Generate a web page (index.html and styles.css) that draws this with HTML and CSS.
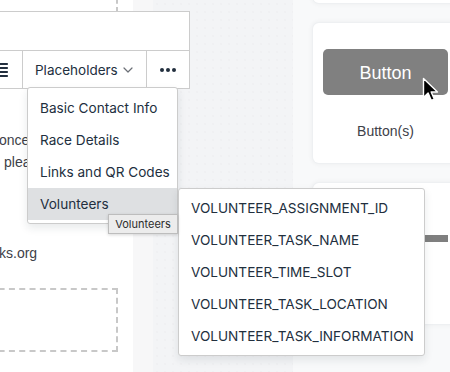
FILE: index.html
```html
<!DOCTYPE html>
<html lang="en">
<head>
    <meta charset="UTF-8">
    <meta name="viewport" content="width=device-width, initial-scale=1.0">
    <title>Email Template Editor</title>
    <link rel="stylesheet" href="styles.css">
</head>
<body>
    <div class="app">
        <aside class="doc">
            <div class="drop-zone drop-top"></div>
            <p class="line first">once</p>
            <p class="line indent">please</p>
            <p class="line link">ks.org</p>
            <div class="drop-zone drop-bottom"></div>
        </aside>
        <div class="gutter"></div>
        <main class="canvas"></main>
        <aside class="blocks">
            <div class="card card-top"></div>
            <div class="card">
                <div class="btn-preview">Button</div>
                <div class="card-label">Button(s)</div>
            </div>
            <div class="card">
                <div class="rule-preview"></div>
            </div>
        </aside>

        <!-- inline editor toolbar -->
        <div class="editor">
            <div class="editor-body"></div>
            <div class="toolbar">
                <div class="tb-group tb-align">
                    <svg width="24" height="24" viewBox="0 0 24 24"><path fill="#222f3e" d="M5 5h14c.6 0 1 .4 1 1s-.4 1-1 1H5a1 1 0 1 1 0-2zm0 4h14c.6 0 1 .4 1 1s-.4 1-1 1H5a1 1 0 1 1 0-2zm0 4h14c.6 0 1 .4 1 1s-.4 1-1 1H5a1 1 0 0 1 0-2zm0 4h14c.6 0 1 .4 1 1s-.4 1-1 1H5a1 1 0 0 1 0-2z"/></svg>
                </div>
                <div class="tb-group tb-menu">
                    <span>Placeholders</span>
                    <svg width="10" height="10" viewBox="0 0 10 10"><path d="M1 3l4 4 4-4" fill="none" stroke="#6b6f76" stroke-width="1.2" stroke-linecap="round" stroke-linejoin="round"/></svg>
                </div>
                <div class="tb-group tb-more">
                    <svg width="24" height="24" viewBox="0 0 24 24"><circle cx="6" cy="12" r="2" fill="#222f3e"/><circle cx="12" cy="12" r="2" fill="#222f3e"/><circle cx="18" cy="12" r="2" fill="#222f3e"/></svg>
                </div>
            </div>
        </div>

        <div class="menu">
            <div class="menu-item">Basic Contact Info</div>
            <div class="menu-item">Race Details</div>
            <div class="menu-item">Links and QR Codes</div>
            <div class="menu-item active">Volunteers</div>
        </div>

        <div class="menu submenu">
            <div class="menu-item">VOLUNTEER_ASSIGNMENT_ID</div>
            <div class="menu-item">VOLUNTEER_TASK_NAME</div>
            <div class="menu-item">VOLUNTEER_TIME_SLOT</div>
            <div class="menu-item">VOLUNTEER_TASK_LOCATION</div>
            <div class="menu-item">VOLUNTEER_TASK_INFORMATION</div>
        </div>

        <div class="tooltip">Volunteers</div>

        <svg class="cursor" width="18" height="26" viewBox="0 0 18 26">
            <path d="M1.5 1.5v19l4.6-4.4 3.2 7.4 3-1.3-3.1-7.2h6.3z" fill="#000" stroke="#fff" stroke-width="1.4" stroke-linejoin="round"/>
        </svg>
    </div>
</body>
</html>
```

FILE: styles.css
```css
body {
    margin: 0;
    font-family: "Liberation Sans", Arial, sans-serif;
}
.app {
    position: relative;
    width: 450px;
    height: 372px;
    overflow: hidden;
    display: flex;
    background: #f8f9fa;
}
.doc {
    width: 133px;
    flex: none;
    background: #fff;
    overflow: hidden;
}
.drop-zone {
    box-sizing: border-box;
    width: 140px;
    margin-left: -22px;
    border: 2px dashed #c8c8c8;
}
.drop-top {
    height: 43px;
    margin-top: -30px;
}
.drop-bottom {
    height: 64px;
    margin-top: 24px;
}
.line {
    margin: 0;
    font-size: 14px;
    line-height: 22px;
    color: #3d4148;
    white-space: nowrap;
}
.first {
    margin-top: 116px;
    margin-left: -1px;
}
.indent {
    padding-left: 4px;
}
.link {
    margin-top: 69px;
    margin-left: -1px;
}
.gutter {
    width: 20px;
    flex: none;
    background: #f7f7f8;
}
.canvas {
    width: 140px;
    flex: none;
    background-color: #f3f4f6;
    background-image: radial-gradient(#eaebee 0.6px, transparent 0.8px);
    background-size: 8px 8px;
}
.blocks {
    flex: 1;
    padding-left: 20px;
    display: flex;
    flex-direction: column;
    gap: 20px;
    overflow: hidden;
    background: #f8f9fa;
}
.card {
    flex: none;
    width: 145px;
    box-sizing: border-box;
    background: #fff;
    border-radius: 6px;
    box-shadow: 0 0 0 1px #eef0f2, 0 0 4px 2px rgba(0, 0, 0, 0.035);
    padding: 26px 10px 0;
}
.card:nth-child(2) {
    height: 140px;
}
.card:nth-child(3) {
    height: 141px;
}
.card-top {
    height: 40px;
    margin-top: -37px;
}
.btn-preview {
    height: 46px;
    box-sizing: border-box;
    padding-top: 2px;
    border-radius: 5px;
    background: #808080;
    color: #fff;
    font-size: 18px;
    display: flex;
    align-items: center;
    justify-content: center;
}
.card-label {
    margin-top: 28px;
    text-align: center;
    font-size: 14px;
    line-height: 16px;
    color: #3d4148;
}
.rule-preview {
    margin-top: 26px;
    height: 7px;
    background: #7f7f7f;
}

/* floating editor */
.editor {
    position: absolute;
    left: -60px;
    top: 11px;
    width: 250px;
    height: 78px;
    box-sizing: border-box;
    border: 1px solid #cccccc;
    background: #fff;
    display: flex;
    flex-direction: column;
    font-family: Inter, "Noto Sans", sans-serif;
}
.editor-body {
    height: 38px;
    border-bottom: 1px solid #cccccc;
}
.toolbar {
    flex: 1;
    display: flex;
}
.tb-group {
    display: flex;
    align-items: center;
}
.tb-align {
    width: 81px;
    justify-content: flex-end;
    padding-right: 10px;
    box-sizing: border-box;
}
.tb-menu {
    width: 124px;
    box-sizing: border-box;
    border-left: 1px solid #cccccc;
    padding: 0 13px 0 12px;
    justify-content: space-between;
    font-size: 13.5px;
    color: #222f3e;
}
.tb-more {
    flex: 1;
    border-left: 1px solid #cccccc;
    justify-content: center;
}
.menu {
    position: absolute;
    left: 27px;
    top: 87px;
    width: 151px;
    box-sizing: border-box;
    padding: 4px 0 3px;
    background: #fff;
    border: 1px solid #cccccc;
    border-radius: 3px;
    box-shadow: 0 4px 8px rgba(34, 47, 62, 0.1);
    font-family: Inter, "Noto Sans", sans-serif;
    font-size: 13.6px;
    color: #222f3e;
}
.menu-item {
    height: 32px;
    line-height: 32px;
    padding: 0 12px;
    white-space: nowrap;
}
.menu-item.active {
    background: #dee0e2;
}
.submenu {
    left: 178px;
    top: 188px;
    width: 247px;
    padding: 3px 0;
}
.tooltip {
    position: absolute;
    left: 108px;
    top: 214px;
    width: 70px;
    height: 20px;
    box-sizing: border-box;
    background: #ececec;
    border: 1px solid #bdbdbd;
    box-shadow: 0 1px 3px rgba(0, 0, 0, 0.15);
    font-family: Inter, "Noto Sans", sans-serif;
    font-size: 11px;
    line-height: 18px;
    color: #2b2b2b;
    text-align: center;
}
.cursor {
    position: absolute;
    left: 422px;
    top: 77px;
}
```
